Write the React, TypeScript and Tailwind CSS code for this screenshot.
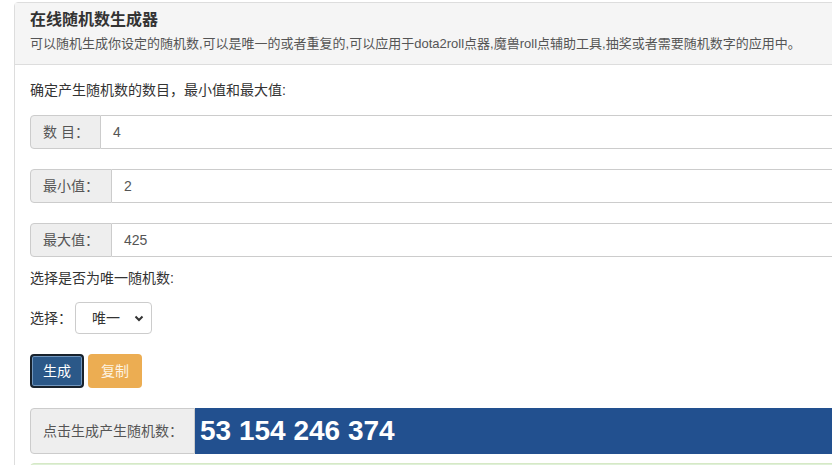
const fields = [
  { label: "数 目：", value: "4", w: "w-[71px]" },
  { label: "最小值：", value: "2", w: "w-[82px]" },
  { label: "最大值：", value: "425", w: "w-[82px]" },
];

const App = () => {
  return (
    <div className="h-[465px] w-[832px] overflow-hidden bg-white font-['Liberation_Sans','Noto_Sans_CJK_SC',sans-serif] text-[#333]">
      <div className="ml-[14px] mt-[2px] w-[1000px] rounded-t-[4px] border border-[#ddd]">
        {/* header */}
        <div className="h-[62px] border-b border-[#ddd] bg-[#f5f5f5] px-[15px] pt-[6px]">
          <h3 className="text-[16px] font-bold leading-[22px] text-[#333]">
            在线随机数生成器
          </h3>
          <p className="mt-[3px] text-[13px] leading-[20px] text-[#555]">
            可以随机生成你设定的随机数,可以是唯一的或者重复的,可以应用于dota2roll点器,魔兽roll点辅助工具,抽奖或者需要随机数字的应用中。
          </p>
        </div>

        {/* body */}
        <div className="px-[15px] pt-[15px]">
          <p className="text-[14px] leading-[20px]">
            确定产生随机数的数目，最小值和最大值:
          </p>

          <div className="mt-[15px] flex flex-col gap-[20px]">
            {fields.map((f) => (
              <div key={f.label} className="flex h-[34px] text-[14px] text-[#555]">
                <div
                  className={`${f.w} flex shrink-0 items-center whitespace-nowrap rounded-l-[4px] border border-[#ccc] bg-[#eee] pl-[12px]`}
                >
                  {f.label}
                </div>
                <div className="flex flex-1 items-center border border-l-0 border-[#ccc] px-[12px]">
                  {f.value}
                </div>
              </div>
            ))}
          </div>

          <p className="mt-[11px] text-[14px] leading-[20px]">
            选择是否为唯一随机数:
          </p>

          <div className="mt-[14px] flex items-center text-[14px]">
            <span className="w-[45px] whitespace-nowrap">选择：</span>
            <div className="flex h-[32px] w-[77px] items-center justify-between rounded-[4px] border border-[#ccc] pl-[16px] pr-[7px] text-[14px] text-[#333]">
              <span>唯一</span>
              <svg width="10" height="7" viewBox="0 0 10 7">
                <polyline
                  points="1.5,1.5 5,5 8.5,1.5"
                  fill="none"
                  stroke="#333"
                  strokeWidth="2"
                />
              </svg>
            </div>
          </div>

          <div className="mt-[20px] flex gap-[4px] text-[14px] text-white">
            <button className="h-[34px] w-[54px] rounded-[4px] border-2 border-[#18222c] bg-[#2b5888] shadow-[inset_0_0_0_1px_#7196bd]">
              生成
            </button>
            <button className="h-[34px] w-[54px] rounded-[4px] bg-[#ecad52] text-[#fdf3e3]">
              复制
            </button>
          </div>

          <div className="mt-[20px] flex h-[46px]">
            <div className="flex w-[165px] shrink-0 items-center whitespace-nowrap rounded-l-[4px] border border-[#ccc] bg-[#eee] pl-[12px] text-[14px] text-[#555]">
              点击生成产生随机数：
            </div>
            <div className="flex flex-1 items-center rounded-r-[4px] bg-[#22508f] pl-[5px] text-[28px] font-bold leading-none text-white">
              53 154 246 374
            </div>
          </div>

          <div className="mt-[9px] h-[40px] rounded-[4px] border border-[#d6e9c6] bg-[#dff0d8]" />
        </div>
      </div>
    </div>
  );
};

export default App;
